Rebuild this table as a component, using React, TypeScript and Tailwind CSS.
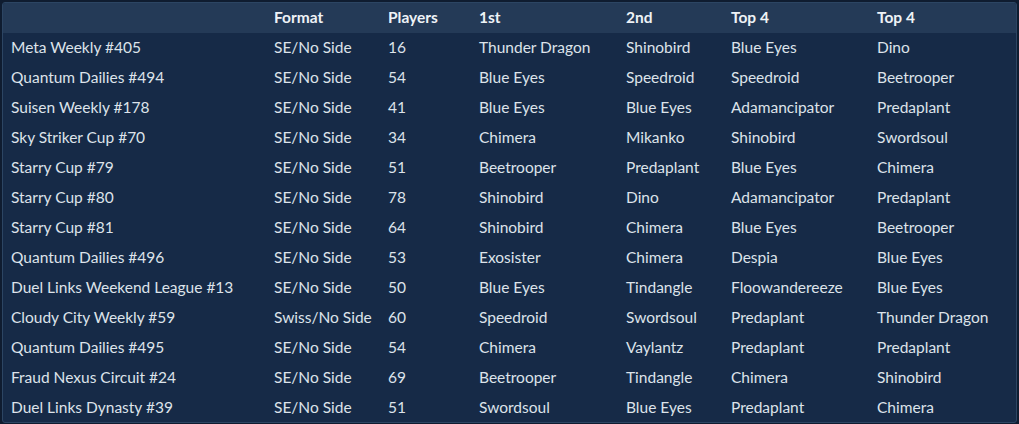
import React from 'react';

type Row = [string, string, number, string, string, string, string];

const ROWS: Row[] = [
  ['Meta Weekly #405', 'SE/No Side', 16, 'Thunder Dragon', 'Shinobird', 'Blue Eyes', 'Dino'],
  ['Quantum Dailies #494', 'SE/No Side', 54, 'Blue Eyes', 'Speedroid', 'Speedroid', 'Beetrooper'],
  ['Suisen Weekly #178', 'SE/No Side', 41, 'Blue Eyes', 'Blue Eyes', 'Adamancipator', 'Predaplant'],
  ['Sky Striker Cup #70', 'SE/No Side', 34, 'Chimera', 'Mikanko', 'Shinobird', 'Swordsoul'],
  ['Starry Cup #79', 'SE/No Side', 51, 'Beetrooper', 'Predaplant', 'Blue Eyes', 'Chimera'],
  ['Starry Cup #80', 'SE/No Side', 78, 'Shinobird', 'Dino', 'Adamancipator', 'Predaplant'],
  ['Starry Cup #81', 'SE/No Side', 64, 'Shinobird', 'Chimera', 'Blue Eyes', 'Beetrooper'],
  ['Quantum Dailies #496', 'SE/No Side', 53, 'Exosister', 'Chimera', 'Despia', 'Blue Eyes'],
  ['Duel Links Weekend League #13', 'SE/No Side', 50, 'Blue Eyes', 'Tindangle', 'Floowandereeze', 'Blue Eyes'],
  ['Cloudy City Weekly #59', 'Swiss/No Side', 60, 'Speedroid', 'Swordsoul', 'Predaplant', 'Thunder Dragon'],
  ['Quantum Dailies #495', 'SE/No Side', 54, 'Chimera', 'Vaylantz', 'Predaplant', 'Predaplant'],
  ['Fraud Nexus Circuit #24', 'SE/No Side', 69, 'Beetrooper', 'Tindangle', 'Chimera', 'Shinobird'],
  ['Duel Links Dynasty #39', 'SE/No Side', 51, 'Swordsoul', 'Blue Eyes', 'Predaplant', 'Chimera'],
];

const HEADERS = ['', 'Format', 'Players', '1st', '2nd', 'Top 4', 'Top 4'];

const App: React.FC = () => {
  return (
    <div className="w-[1019px] h-[424px] bg-[#0f1c30] p-[2px] overflow-hidden font-['Lato','Liberation_Sans',sans-serif]">
      <div className="w-[1015px] h-[421px] rounded-[3px] border border-[#2c4563] bg-[#162a47] overflow-hidden">
        <table className="w-full table-fixed border-collapse text-[15.5px] text-[#dde3ea]">
          <colgroup>
            <col className="w-[263px]" />
            <col className="w-[114px]" />
            <col className="w-[91px]" />
            <col className="w-[147px]" />
            <col className="w-[105px]" />
            <col className="w-[146px]" />
            <col />
          </colgroup>
          <thead>
            <tr className="h-[30px] bg-[#243a57]">
              {HEADERS.map((h, i) => (
                <th key={i} className="text-left text-[15.5px] font-bold text-[#eef2f6] pl-[8px] whitespace-nowrap">
                  {h}
                </th>
              ))}
            </tr>
          </thead>
          <tbody>
            {ROWS.map((r, i) => (
              <tr key={i} className="h-[30px]">
                {r.map((c, j) => (
                  <td key={j} className="pl-[8px] whitespace-nowrap">
                    {c}
                  </td>
                ))}
              </tr>
            ))}
          </tbody>
        </table>
      </div>
    </div>
  );
};

export default App;
